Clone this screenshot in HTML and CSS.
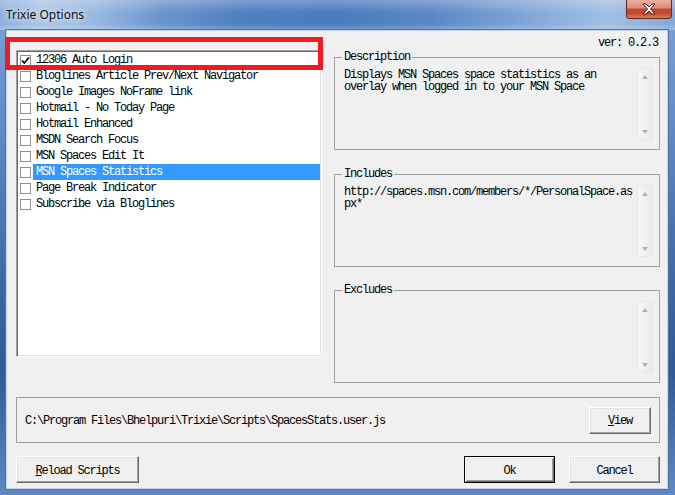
FILE: index.html
```html
<!DOCTYPE html>
<html lang="en">
<head>
    <meta charset="UTF-8">
    <meta name="viewport" content="width=device-width, initial-scale=1.0">
    <title>Trixie Options</title>
    <link rel="stylesheet" href="styles.css">
</head>
<body>
    <div class="window">
        <div class="titlebar">
            <span class="title">Trixie Options</span>
            <div class="close-btn">
                <svg width="14" height="12" viewBox="-1 -1 14 12">
                    <polygon points="0,0 3,0 6,3 9,0 12,0 7.5,5 12,10 9,10 6,7 3,10 0,10 4.5,5" fill="#fff" stroke="#4a2018" stroke-width="1" stroke-linejoin="round"/>
                </svg>
            </div>
        </div>

        <div class="client">
            <div class="main">
                <!-- installed scripts -->
                <div class="script-list">
                    <div class="item">
                        <span class="check">
                            <svg width="9" height="9" viewBox="0 0 9 9"><polyline points="1,4.5 3.3,7 8,1.5" fill="none" stroke="#000" stroke-width="1.8"/></svg>
                        </span>
                        <span class="name">12306 Auto Login</span>
                    </div>
                    <div class="item"><span class="check"></span><span class="name">Bloglines Article Prev/Next Navigator</span></div>
                    <div class="item"><span class="check"></span><span class="name">Google Images NoFrame link</span></div>
                    <div class="item"><span class="check"></span><span class="name">Hotmail - No Today Page</span></div>
                    <div class="item"><span class="check"></span><span class="name">Hotmail Enhanced</span></div>
                    <div class="item"><span class="check"></span><span class="name">MSDN Search Focus</span></div>
                    <div class="item"><span class="check"></span><span class="name">MSN Spaces Edit It</span></div>
                    <div class="item selected"><span class="check"></span><span class="name">MSN Spaces Statistics</span></div>
                    <div class="item"><span class="check"></span><span class="name">Page Break Indicator</span></div>
                    <div class="item"><span class="check"></span><span class="name">Subscribe via Bloglines</span></div>
                </div>

                <!-- details of the selected script -->
                <div class="details">
                    <div class="version">ver: 0.2.3</div>

                    <fieldset class="group">
                        <legend>Description</legend>
                        <div class="textbox">
                            <div class="text">Displays MSN Spaces space statistics as an overlay when logged in to your MSN Space</div>
                            <div class="scrollbar"><span class="arrow up"></span><span class="arrow down"></span></div>
                        </div>
                    </fieldset>

                    <fieldset class="group includes">
                        <legend>Includes</legend>
                        <div class="textbox">
                            <div class="text">http://spaces.msn.com/members/*/PersonalSpace.aspx*</div>
                            <div class="scrollbar"><span class="arrow up"></span><span class="arrow down"></span></div>
                        </div>
                    </fieldset>

                    <fieldset class="group excludes">
                        <legend>Excludes</legend>
                        <div class="textbox">
                            <div class="text"></div>
                            <div class="scrollbar"><span class="arrow up"></span><span class="arrow down"></span></div>
                        </div>
                    </fieldset>
                </div>
            </div>

            <div class="path-box">
                <span class="path">C:\Program Files\Bhelpuri\Trixie\Scripts\SpacesStats.user.js</span>
                <button class="btn view-btn"><u>V</u>iew</button>
            </div>

            <div class="button-row">
                <button class="btn reload-btn"><u>R</u>eload Scripts</button>
                <div class="spacer"></div>
                <button class="btn default">Ok</button>
                <button class="btn">Cancel</button>
            </div>
        </div>

        <div class="mark-box"></div>
    </div>
</body>
</html>
```

FILE: styles.css
```css
html, body {
    margin: 0;
    padding: 0;
    width: 675px;
    height: 495px;
    overflow: hidden;
}
.window {
    position: relative;
    width: 675px;
    height: 495px;
    display: flex;
    flex-direction: column;
    background: linear-gradient(to bottom, #7ea3d6 0%, #5b86c3 30%, #3e6aa6 55%, #2f5a93 75%, #5d89c5 100%);
    font-family: "Liberation Mono", monospace;
    font-size: 12px;
    letter-spacing: -1.2px;
    color: #000;
}

/* title bar */
.titlebar {
    height: 30px;
    flex: none;
    display: flex;
    justify-content: space-between;
    align-items: flex-start;
    padding-left: 6px;
    background:
        linear-gradient(to bottom, rgba(255,255,255,0.25) 0%, rgba(255,255,255,0) 45%, rgba(255,255,255,0) 80%, rgba(255,255,255,0.25) 100%),
        linear-gradient(to right, #8db0dc 0%, #a9c4e7 6%, #9ab9e1 14%, #6b94cc 24%, #4f7fbf 36%, #4a7bbc 50%, #5b88c5 64%, #86aad9 80%, #a1bfe4 90%, #86a8d6 100%);
}
.title {
    font-family: "Noto Sans", "Open Sans", sans-serif;
    font-size: 12px;
    letter-spacing: 0;
    line-height: 30px;
    color: #111;
    text-shadow: 0 0 6px rgba(255,255,255,0.9), 0 0 10px rgba(255,255,255,0.7);
}
.close-btn {
    width: 46px;
    height: 19px;
    margin-right: 3px;
    box-sizing: border-box;
    border: 1px solid #5e2a20;
    border-top: none;
    border-radius: 0 0 4px 4px;
    background: linear-gradient(to bottom, #ebb0a2 0%, #de8e7c 42%, #c8462d 52%, #c04a31 75%, #d77f62 100%);
    display: flex;
    align-items: center;
    justify-content: center;
}

/* dialog body */
.client {
    flex: 1;
    margin: 0 7px 6px 6px;
    background: #f0f0f0;
    border: 1px solid #c2d3ea;
    box-shadow: 0 0 0 1px #55739f;
    padding: 5px 7px 0 9px;
    display: flex;
    flex-direction: column;
}
.main {
    display: grid;
    grid-template-columns: 306px 326px;
    column-gap: 12px;
}

.script-list {
    margin-top: 14px;
    height: 307px;
    box-sizing: border-box;
    background: white;
    border: 1px solid;
    border-color: #a0a0a0 #fff #fff #a0a0a0;
    box-shadow: inset 1px 1px #696969, inset -1px -1px #e3e3e3;
    padding: 1px;
}
.item {
    display: flex;
    align-items: center;
    height: 16px;
    padding-left: 2px;
}
.check {
    width: 11px;
    height: 11px;
    flex: none;
    box-sizing: border-box;
    border: 1px solid #8f8f8f;
    background: white;
    display: flex;
    align-items: center;
    justify-content: center;
}
.name {
    flex: 1;
    margin-left: 2px;
    padding: 1px 0 1px 3px;
    line-height: 14px;
    white-space: nowrap;
}
.item.selected .name {
    background: #3399ff;
    color: white;
}

.version {
    line-height: 12px;
    text-align: right;
    padding: 1px 2px 0 0;
}
.group {
    margin: 0;
    padding: 3px 6px 8px 5px;
    border: 1px solid #a0a0a0;
    min-width: 0;
}
.group.includes {
    margin-top: 16px;
}
.group.excludes {
    margin-top: 15px;
}
.group legend {
    padding: 0 2px;
    margin-left: 2px;
    line-height: 16px;
}
.textbox {
    display: flex;
    height: 73px;
}
.text {
    flex: 1;
    min-width: 0;
    padding: 1px 4px;
    line-height: 12px;
    overflow-wrap: anywhere;
}
.scrollbar {
    width: 16px;
    height: 72px;
    box-sizing: border-box;
    border: 1px solid #e8e8e8;
    background: linear-gradient(to right, #f6f6f6, #ebebeb);
    display: flex;
    flex-direction: column;
    justify-content: space-between;
}
.arrow {
    height: 15px;
    display: flex;
    align-items: center;
    justify-content: center;
}
.arrow::after {
    content: "";
    border-left: 3.5px solid transparent;
    border-right: 3.5px solid transparent;
}
.arrow.up::after {
    border-bottom: 4px solid #b0b0b0;
}
.arrow.down::after {
    border-top: 4px solid #b0b0b0;
}

.path-box {
    margin-top: 14px;
    height: 46px;
    box-sizing: border-box;
    border: 1px solid #a0a0a0;
    padding: 0 8px;
    display: flex;
    align-items: center;
    justify-content: space-between;
}
.path {
    padding-top: 2px;
}

.btn {
    font: inherit;
    letter-spacing: inherit;
    color: #000;
    height: 27px;
    padding: 2px 0 0;
    background: #f0f0f0;
    border: 1px solid;
    border-color: #fff #696969 #696969 #fff;
    box-shadow: inset -1px -1px #a0a0a0, inset 1px 1px #e3e3e3;
    width: 91px;
}
.btn.default {
    border: 1px solid #000;
    box-shadow: inset 1px 1px #fff, inset -1px -1px #696969, inset 2px 2px #e3e3e3, inset -2px -2px #a0a0a0;
}
.view-btn {
    width: 62px;
}
.reload-btn {
    width: 123px;
}
.button-row {
    margin-top: 13px;
    display: flex;
    gap: 14px;
}
.spacer {
    flex: 1;
}

/* red annotation drawn over the dialog */
.mark-box {
    position: absolute;
    left: 5px;
    top: 37px;
    width: 318px;
    height: 33px;
    box-sizing: border-box;
    border: 5px solid #ed1c24;
    pointer-events: none;
}
```
